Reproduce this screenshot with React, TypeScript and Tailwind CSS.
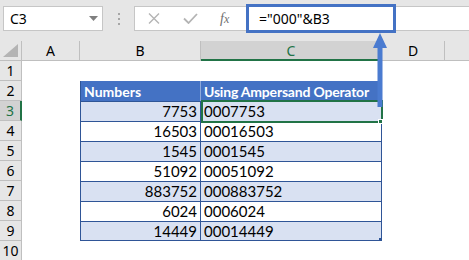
const ROWS: { n: number; value?: number; text?: string }[] = [
  { n: 3, value: 7753 },
  { n: 4, value: 16503 },
  { n: 5, value: 1545 },
  { n: 6, value: 51092 },
  { n: 7, value: 883752 },
  { n: 8, value: 6024 },
  { n: 9, value: 14449 },
];

const cellFont = { fontFamily: "Lato, 'Liberation Sans', sans-serif" };
const uiFont = { fontFamily: "'Noto Sans', 'Open Sans', sans-serif" };

const RowHead = ({ n, active }: { n: number; active?: boolean }) => (
  <div
    className={
      active
        ? "flex h-[20px] items-center justify-center border-b border-r-2 border-b-[#bfbfbf] border-r-[#217346] bg-[#d2d2d2] text-[14px] text-[#217346]"
        : "flex h-[20px] items-center justify-center border-b border-r border-[#bfbfbf] bg-[#e6e6e6] text-[14px] text-black"
    }
    style={uiFont}
  >
    {n}
  </div>
);

const Empty = () => <div className="h-[20px] bg-white" />;

export default function App() {
  return (
    <div className="relative h-[260px] w-[469px] overflow-hidden bg-white">
      {/* formula bar */}
      <div className="flex h-[41px] items-start bg-[#e6e6e6] pt-[6px]" style={uiFont}>
        <div className="ml-[3px] flex h-[25px] w-[100px] items-center justify-between border border-[#c6c6c6] bg-white pl-[6px] pr-[4px] text-[14px] text-black">
          <span>C3</span>
          <svg width="9" height="5" viewBox="0 0 9 5">
            <path d="M0 0h9L4.5 5z" fill="#7f7f7f" />
          </svg>
        </div>
        <div className="ml-[13px] flex h-[25px] w-[5px] flex-col items-center justify-center gap-[3px]">
          <span className="h-[2px] w-[2px] bg-[#a6a6a6]" />
          <span className="h-[2px] w-[2px] bg-[#a6a6a6]" />
          <span className="h-[2px] w-[2px] bg-[#a6a6a6]" />
        </div>
        <div className="ml-[13px] flex h-[25px] flex-1 items-center border border-r-0 border-[#c6c6c6] bg-white">
          <svg className="ml-[13px]" width="12" height="11" viewBox="0 0 12 11">
            <path d="M1 0.5L11 10.5M11 0.5L1 10.5" stroke="#b4b4b4" strokeWidth="1.4" />
          </svg>
          <svg className="ml-[23px]" width="15" height="11" viewBox="0 0 15 11">
            <path d="M1 5.5L5.5 10L14 1" stroke="#b4b4b4" strokeWidth="1.8" fill="none" />
          </svg>
          <span
            className="ml-[22px] text-[14px] italic text-[#6f6f6f]"
            style={{ fontFamily: "'Liberation Serif', serif" }}
          >
            f<span className="text-[12px]">x</span>
          </span>
        </div>
      </div>

      {/* formula highlight */}
      <div
        className="absolute left-[246px] top-[4px] flex h-[29px] w-[150px] items-center border-[3px] border-[#4472c4] bg-white pl-[10px] text-[14px] text-black"
        style={uiFont}
      >
        ="000"&amp;B3
      </div>

      {/* sheet grid */}
      <div className="grid grid-cols-[22px_58px_121px_181px_63px_24px]" style={uiFont}>
        {/* column headers */}
        <div className="relative h-[20px] border-b border-r border-[#bfbfbf] bg-[#e6e6e6]">
          <svg className="absolute bottom-[3px] right-[3px]" width="15" height="13" viewBox="0 0 15 13">
            <path d="M15 0V13H0z" fill="#b4b4b4" />
          </svg>
        </div>
        <div className="flex h-[20px] items-center justify-center border-b border-r border-[#bfbfbf] bg-[#e6e6e6] text-[14px] text-black">A</div>
        <div className="flex h-[20px] items-center justify-center border-b border-r border-[#bfbfbf] bg-[#e6e6e6] text-[14px] text-black">B</div>
        <div className="flex h-[20px] items-center justify-center border-b-2 border-r border-b-[#217346] border-r-[#bfbfbf] bg-[#d2d2d2] text-[14px] text-[#217346]">C</div>
        <div className="flex h-[20px] items-center justify-center border-b border-r border-[#bfbfbf] bg-[#e6e6e6] text-[14px] text-black">D</div>
        <div className="h-[20px] border-b border-[#bfbfbf] bg-[#e6e6e6]" />

        {/* row 1 */}
        <RowHead n={1} />
        <Empty />
        <Empty />
        <Empty />
        <Empty />
        <Empty />

        {/* row 2: table header */}
        <RowHead n={2} />
        <Empty />
        <div
          className="flex h-[20px] items-center whitespace-nowrap border-l border-r border-l-[#2f5597] border-r-[#8ea9db] bg-[#4472c4] pl-[3px] text-[14px] font-bold text-white"
          style={cellFont}
        >
          Numbers
        </div>
        <div
          className="flex h-[20px] items-center overflow-hidden whitespace-nowrap border-r border-r-[#2f5597] bg-[#4472c4] pl-[3px] text-[14px] font-bold tracking-[-0.2px] text-white"
          style={cellFont}
        >
          Using Ampersand Operator
        </div>
        <Empty />
        <Empty />

        {ROWS.map((r) => {
          const band = r.n % 2 === 1 ? "bg-[#d9e1f2]" : "bg-white";
          return [
            <RowHead key={`h${r.n}`} n={r.n} active={r.n === 3} />,
            <Empty key={`a${r.n}`} />,
            <div
              key={`b${r.n}`}
              className={`flex h-[20px] items-center justify-end border-l border-t border-r border-[#2f5597] pr-[3px] text-[15px] text-black ${band} ${r.n === 9 ? "border-b" : ""}`}
              style={cellFont}
            >
              {r.value}
            </div>,
            <div
              key={`c${r.n}`}
              className={`flex h-[20px] items-center border-t border-r border-[#2f5597] pl-[3px] text-[15px] text-black ${band} ${r.n === 9 ? "border-b" : ""}`}
              style={cellFont}
            >
              {"000" + r.value}
            </div>,
            <Empty key={`d${r.n}`} />,
            <Empty key={`e${r.n}`} />,
          ];
        })}

        <RowHead n={10} />
        <Empty />
        <Empty />
        <Empty />
        <Empty />
        <Empty />
      </div>

      {/* active cell C3 */}
      <div className="pointer-events-none absolute left-[201px] top-[100px] h-[23px] w-[182px] border-2 border-[#217346]" />
      <div className="absolute left-[378px] top-[119px] h-[5px] w-[5px] border border-white bg-[#217346]" />

      {/* table resize corner */}
      <div className="absolute left-[379px] top-[238px] h-[3px] w-[3px] bg-[#2f5597]" />

      {/* arrow pointing to formula */}
      <svg className="absolute left-[372px] top-[33px]" width="16" height="75" viewBox="0 0 16 75">
        <path d="M8 0L15 15H10.5V74H5.5V15H1z" fill="#4a7bd0" />
      </svg>
    </div>
  );
}
